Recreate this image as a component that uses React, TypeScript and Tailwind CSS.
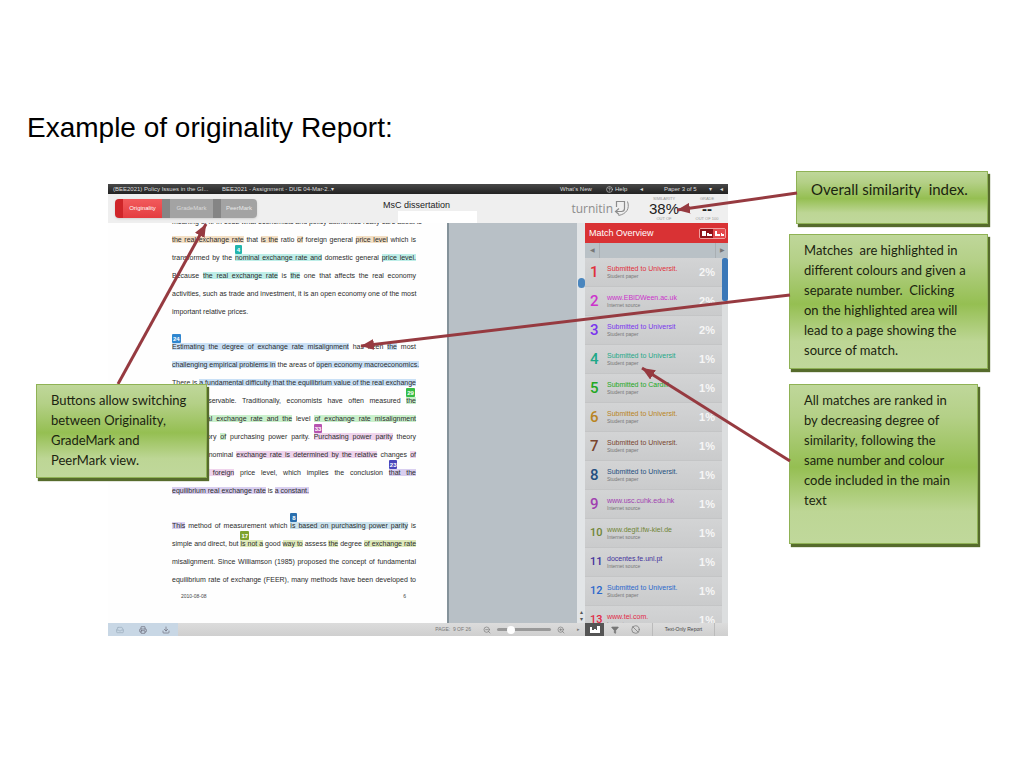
import React from 'react';
import { Filter, Ban, Printer, Download, ZoomIn, ZoomOut, Inbox, CircleHelp } from 'lucide-react';

type Segment = { text: string; mark?: string; badge?: string; badgeColor?: string };
type Line = Segment[];

const SAND = 'bg-[#f3dfc4]';
const AQUA = 'bg-[#bdeee8]';
const BLUE = 'bg-[#c9e0f6]';
const GREEN = 'bg-[#c9f0cb]';
const PINK = 'bg-[#efd3ec]';
const VIOLET = 'bg-[#d9cff0]';
const SKY = 'bg-[#cbe3ee]';
const OLIVE = 'bg-[#dfeabb]';

const paragraphs: Line[][] = [
  [
    [{ text: 'meaning of it. In 1982 what economists and policy authorities really care about is' }],
    [
      { text: 'the real exchange rate', mark: SAND },
      { text: ' that ' },
      { text: 'is the', mark: SAND },
      { text: ' ratio ' },
      { text: 'of', mark: SAND },
      { text: ' foreign general ' },
      { text: 'price level', mark: SAND },
      { text: ' which is' },
    ],
    [
      { text: 'transformed by the ' },
      { text: 'nominal exchange rate and', mark: AQUA, badge: '4', badgeColor: 'bg-[#22b5ad]' },
      { text: ' domestic general ' },
      { text: 'price level.', mark: AQUA },
    ],
    [
      { text: 'Because ' },
      { text: 'the real exchange rate', mark: AQUA },
      { text: ' is ' },
      { text: 'the', mark: AQUA },
      { text: ' one that affects the real economy' },
    ],
    [{ text: 'activities, such as trade and investment, it is an open economy one of the most' }],
    [{ text: 'important relative prices.' }],
  ],
  [
    [
      { text: 'Estimating the degree of exchange rate misalignment', mark: BLUE, badge: '24', badgeColor: 'bg-[#2f86cf]' },
      { text: ' has been ' },
      { text: 'the', mark: BLUE },
      { text: ' most' },
    ],
    [
      { text: 'challenging empirical problems in', mark: BLUE },
      { text: ' the areas of ' },
      { text: 'open economy macroeconomics.', mark: BLUE },
    ],
    [
      { text: 'There is ' },
      { text: 'a fundamental difficulty that the equilibrium value of the real exchange', mark: BLUE },
    ],
    [
      { text: 'rate is observable. Traditionally, economists have often measured ' },
      { text: 'the', mark: GREEN, badge: '29', badgeColor: 'bg-[#35bd45]' },
    ],
    [
      { text: 'bilateral real exchange rate and the', mark: GREEN },
      { text: ' level ' },
      { text: 'of exchange rate misalignment', mark: GREEN },
    ],
    [
      { text: 'by the theory ' },
      { text: 'of', mark: GREEN },
      { text: ' purchasing power parity. ' },
      { text: 'Purchasing power parity', mark: PINK, badge: '33', badgeColor: 'bg-[#b753b0]' },
      { text: ' theory' },
    ],
    [
      { text: 'states that nominal ' },
      { text: 'exchange rate is determined by the relative', mark: PINK },
      { text: ' changes ' },
      { text: 'of', mark: PINK },
    ],
    [
      { text: 'home and foreign', mark: PINK },
      { text: ' price level, which implies the conclusion ' },
      { text: 'that the', mark: VIOLET, badge: '23', badgeColor: 'bg-[#4a45ba]' },
    ],
    [
      { text: 'equilibrium real exchange rate', mark: VIOLET },
      { text: ' is ' },
      { text: 'a constant.', mark: VIOLET },
    ],
  ],
  [
    [
      { text: 'This', mark: VIOLET },
      { text: ' method of measurement which ' },
      { text: 'is based on purchasing power parity', mark: SKY, badge: '8', badgeColor: 'bg-[#2a6fae]' },
      { text: ' is' },
    ],
    [
      { text: 'simple and direct, but ' },
      { text: 'is not a', mark: OLIVE, badge: '17', badgeColor: 'bg-[#7fa32c]' },
      { text: ' good ' },
      { text: 'way to', mark: OLIVE },
      { text: ' assess ' },
      { text: 'the', mark: OLIVE },
      { text: ' degree ' },
      { text: 'of exchange rate', mark: OLIVE },
    ],
    [{ text: 'misalignment. Since Williamson (1985) proposed the concept of fundamental' }],
    [{ text: 'equilibrium rate of exchange (FEER), many methods have been developed to' }],
  ],
];

const matches = [
  { rank: 1, title: 'Submitted to Universit.', kind: 'Student paper', share: '2%', color: 'text-[#e0303c]' },
  { rank: 2, title: 'www.EBIDWeen.ac.uk', kind: 'Internet source', share: '2%', color: 'text-[#cc33cc]' },
  { rank: 3, title: 'Submitted to Universit', kind: 'Student paper', share: '2%', color: 'text-[#7a35ee]' },
  { rank: 4, title: 'Submitted to Universit', kind: 'Student paper', share: '1%', color: 'text-[#1fa888]' },
  { rank: 5, title: 'Submitted to Cardiff', kind: 'Student paper', share: '1%', color: 'text-[#22a822]' },
  { rank: 6, title: 'Submitted to Universit.', kind: 'Student paper', share: '1%', color: 'text-[#b98422]' },
  { rank: 7, title: 'Submitted to Universit.', kind: 'Student paper', share: '1%', color: 'text-[#79452f]' },
  { rank: 8, title: 'Submitted to Universit.', kind: 'Student paper', share: '1%', color: 'text-[#244f80]' },
  { rank: 9, title: 'www.usc.cuhk.edu.hk', kind: 'Internet source', share: '1%', color: 'text-[#a040b0]' },
  { rank: 10, title: 'www.degit.ifw-kiel.de', kind: 'Internet source', share: '1%', color: 'text-[#6f8535]' },
  { rank: 11, title: 'docentes.fe.unl.pt', kind: 'Internet source', share: '1%', color: 'text-[#43329c]' },
  { rank: 12, title: 'Submitted to Universit.', kind: 'Student paper', share: '1%', color: 'text-[#2c68cc]' },
  { rank: 13, title: 'www.tei.com.', kind: 'Internet source', share: '1%', color: 'text-[#e22a48]' },
];

const arrows = [
  { x1: 118, y1: 214, x2: 206, y2: 54 },
  { x1: 797, y1: 23, x2: 677, y2: 40 },
  { x1: 790, y1: 125, x2: 361, y2: 176 },
  { x1: 790, y1: 291, x2: 642, y2: 198 },
];

function Callout({ lines, className }: { lines: string[]; className: string }) {
  return (
    <div
      className={`border border-[#8fb255] bg-[linear-gradient(180deg,#bfd79a_0%,#b4d087_20%,#95bf52_52%,#bdd695_80%,#c0d89b_100%)] pt-[5px] pl-[14px] leading-[20px] whitespace-pre text-[#1b2410] shadow-[2px_3px_1px_#566b2c] ${className}`}
    >
      {lines.map((line) => (
        <p key={line}>{line}</p>
      ))}
    </div>
  );
}

function TextLine({ line, last }: { line: Line; last: boolean }) {
  return (
    <p className={last ? 'whitespace-nowrap' : 'whitespace-nowrap [text-align-last:justify]'}>
      {line.map((segment, i) => (
        <span key={i} className={`relative ${segment.mark ?? ''}`}>
          {segment.badge && (
            <span
              className={`absolute bottom-full left-0 flex h-[9px] min-w-[7px] items-center justify-center rounded-[1px] px-px text-[6px] leading-[6px] font-bold text-white ${segment.badgeColor}`}
            >
              {segment.badge}
            </span>
          )}
          {segment.text}
        </span>
      ))}
    </p>
  );
}

function TopBar() {
  return (
    <nav className="flex h-[10px] items-center bg-linear-to-b from-[#484848] to-[#222] px-[5px] text-[6px] leading-[10px] whitespace-nowrap text-[#dedede]">
      <a href="#course" className="w-[109px]">(BEE2021) Policy Issues in the GI...</a>
      <a href="#assignment">BEE2021 - Assignment - DUE 04-Mar-2..▾</a>
      <div className="ml-auto flex items-center">
        <a href="#new" className="w-[46px]">What's New</a>
        <a href="#help" className="flex w-[34px] items-center gap-[2px]">
          <CircleHelp className="h-[7px] w-[7px]" />
          Help
        </a>
        <button type="button" aria-label="Previous paper" className="w-[24px] text-left">◂</button>
        <span className="w-[45px]">Paper 3 of 5</span>
        <button type="button" aria-label="Choose paper" className="w-[11px] text-left">▾</button>
        <button type="button" aria-label="Next paper">◂</button>
      </div>
    </nav>
  );
}

function TurnitinLogo() {
  return (
    <div className="flex items-center text-[#8c8c8c]">
      <span className="font-['Open_Sans',sans-serif] text-[12px] leading-[16px]">turnitin</span>
      <svg viewBox="0 0 17 17" className="h-[17px] w-[17px]" fill="none" stroke="currentColor">
        <path d="M3.500 7V1.500h8v7c0 2-1 3-3 3H3" strokeWidth="1.200" />
        <path d="M6 8.500L2.500 11.500L6 14.500" strokeWidth="1.200" />
        <path d="M14.500 1.500c2.500 7-1 12.500-9 14" strokeWidth="1" />
      </svg>
    </div>
  );
}

function Header() {
  return (
    <header className="flex h-[29px] items-center bg-[#efefef] pl-[7px]">
      <div className="flex h-[19px] overflow-hidden rounded-[4px] text-[6px] text-white shadow-sm">
        <button type="button" className="w-[47px] border-l-8 border-[#cf2529] bg-linear-to-b from-[#f25a5c] to-[#e43c40]">
          Originality
        </button>
        <button type="button" className="w-[51px] border-l-8 border-[#858585] bg-[#a3a3a3] text-[#dadada]">
          GradeMark
        </button>
        <button type="button" className="w-[44px] border-l-8 border-[#858585] bg-[#a3a3a3] text-[#e8e8e8]">
          PeerMark
        </button>
      </div>
      <div className="relative flex-1 self-stretch">
        <h2 className="pt-[5px] pl-[126px] text-[9px] leading-[12px] text-[#222]">MsC dissertation</h2>
        <div className="ml-[141px] h-[12px] w-[79px] bg-white" />
      </div>
      <TurnitinLogo />
      <div className="ml-[17px] w-[34px] text-center text-[#999]">
        <p className="text-[4px] leading-[5px]">SIMILARITY</p>
        <p className="text-[15px] leading-[15px] text-[#222]">38%</p>
        <p className="text-[4px] leading-[5px]">OUT OF</p>
      </div>
      <div className="mr-[5px] ml-[10px] w-[32px] text-center text-[#999]">
        <p className="text-[4px] leading-[5px]">GRADE</p>
        <p className="text-[15px] leading-[15px] font-bold text-[#222]">--</p>
        <p className="text-[4px] leading-[5px]">OUT OF 100</p>
      </div>
    </header>
  );
}

function Document() {
  return (
    <article className="w-[341px] shrink-0 overflow-hidden border-r-2 border-[#84929a] bg-[#fefefe]">
      <div className="-mt-[10px] ml-[64px] flex w-[244px] flex-col gap-[17px] text-[7px] leading-[18px] text-[#2c2c2c]">
        {paragraphs.map((lines, p) => (
          <div key={p}>
            {lines.map((line, i) => (
              <TextLine key={i} line={line} last={p < 2 && i === lines.length - 1} />
            ))}
          </div>
        ))}
      </div>
      <div className="ml-[73px] flex w-[225px] justify-between text-[5px] leading-[14px] text-[#444]">
        <span>2010-08-08</span>
        <span>6</span>
      </div>
    </article>
  );
}

function MatchPanel() {
  return (
    <section className="flex w-[143px] flex-col overflow-hidden bg-[#cdcecf]">
      <div className="flex h-[20px] shrink-0 items-center justify-between bg-[#d93234] pr-[2px] pl-[4px]">
        <h3 className="text-[9px] leading-[18px] text-white">Match Overview</h3>
        <div className="flex h-[11px] overflow-hidden rounded-[2px] border border-[#efa0a0]">
          <button type="button" aria-label="Match overview" className="w-[13px] bg-[#8e1218]">
            <svg viewBox="0 0 13 9" className="h-[9px] w-[13px]" fill="white">
              <path d="M2 2h4v5H2zM7 4h2v3H7zM9 5h3v2h-3z" />
            </svg>
          </button>
          <button type="button" aria-label="All sources" className="w-[12px] bg-[#e4494c]">
            <svg viewBox="0 0 12 9" className="h-[9px] w-[12px]" fill="white">
              <path d="M2 2h2v5H2zM4 5h3v2H4zM8 4h1v3H8zM9 5h2v2H9z" />
            </svg>
          </button>
        </div>
      </div>
      <div className="flex h-[15px] shrink-0 items-center justify-between bg-[#b9c1c6] text-[6px] leading-[15px] text-[#777]">
        <button type="button" aria-label="Previous match" className="h-full w-[15px] border-r border-[#a9afb3]">◀</button>
        <button type="button" aria-label="Next match" className="h-full w-[13px] border-l border-[#a9afb3]">▶</button>
      </div>
      <div className="flex min-h-0 flex-1">
        <ol className="flex-1">
          {matches.map((match) => (
            <li
              key={match.rank}
              className="flex h-[29px] items-center border-b border-[#c4c5c6] bg-linear-to-b from-[#d3d4d5] to-[#cacbcc] pr-[7px] pl-[5px]"
            >
              <span className={`w-[17px] font-['Roboto',sans-serif] font-medium ${match.rank > 9 ? 'text-[11px]' : 'text-[15px]'} ${match.color}`}>
                {match.rank}
              </span>
              <span className="flex-1 whitespace-nowrap">
                <a href={`#match-${match.rank}`} className={`block text-[7px] leading-[8px] ${match.color}`}>
                  {match.title}
                </a>
                <span className="block text-[5px] leading-[6px] text-[#777]">{match.kind}</span>
              </span>
              <span className="text-[11px] font-bold text-[#f6f6f6]">{match.share}</span>
            </li>
          ))}
        </ol>
        <div className="w-[6px] bg-[#dcdedf]">
          <div className="h-[43px] rounded-[2px] bg-[#3b78b8]" />
        </div>
      </div>
    </section>
  );
}

function BottomBar() {
  return (
    <footer className="flex h-[13px] items-center bg-linear-to-b from-[#dcdcdc] to-[#cfcfcf] text-[5px] leading-[13px] text-[#777]">
      <div className="flex h-full w-[70px] items-center justify-around bg-[#c8d7e5] text-[#667]">
        <button type="button" aria-label="Inbox"><Inbox className="h-[8px] w-[8px] text-[#9ab]" /></button>
        <button type="button" aria-label="Print"><Printer className="h-[8px] w-[8px]" /></button>
        <button type="button" aria-label="Download"><Download className="h-[8px] w-[8px]" /></button>
      </div>
      <span className="ml-auto">PAGE: &nbsp;9 OF 26</span>
      <ZoomOut className="ml-[12px] h-[8px] w-[8px]" />
      <input
        type="range"
        aria-label="Zoom"
        defaultValue={22}
        className="mx-[6px] h-[3px] w-[54px] appearance-none rounded bg-[#999] [&::-webkit-slider-thumb]:h-[8px] [&::-webkit-slider-thumb]:w-[8px] [&::-webkit-slider-thumb]:appearance-none [&::-webkit-slider-thumb]:rounded-full [&::-webkit-slider-thumb]:bg-white"
      />
      <ZoomIn className="mr-[12px] h-[8px] w-[8px]" />
      <span className="w-[8px]">▸</span>
      <div className="flex h-full w-[143px] items-center">
        <button type="button" aria-label="Sources" className="flex h-full w-[19px] items-center justify-center bg-[#555]">
          <svg viewBox="0 0 10 7" className="h-[7px] w-[10px]" fill="white">
            <path d="M0 1h2v3h2V3h2v1h1V0h3v7H0z" />
          </svg>
        </button>
        <button type="button" aria-label="Filter" className="flex w-[22px] justify-center">
          <Filter className="h-[8px] w-[8px]" fill="currentColor" />
        </button>
        <button type="button" aria-label="Exclude" className="flex w-[18px] justify-center">
          <Ban className="h-[9px] w-[9px]" />
        </button>
        <button type="button" className="ml-[8px] h-full w-[63px] border-x border-[#bbb] text-[5px] text-[#444]">
          Text-Only Report
        </button>
      </div>
    </footer>
  );
}

function ReportWindow() {
  return (
    <div className="mt-[14px] min-w-0 flex-1">
      <TopBar />
      <Header />
      <div className="flex h-[400px]">
        <Document />
        <div className="flex-1 bg-[#b8c0c6]" />
        <div className="flex w-[8px] flex-col items-center bg-[#e2e5e7]">
          <div className="mt-[55px] h-[10px] w-[7px] rounded-full bg-[#4a86be]" />
          <div className="mt-auto text-[6px] leading-[7px] text-[#555]">
            <p>▴</p>
            <p>▾</p>
          </div>
        </div>
        <MatchPanel />
      </div>
      <BottomBar />
    </div>
  );
}

export default function App() {
  return (
    <main className="min-h-screen bg-white pt-[110px] font-['Liberation_Sans',Arial,sans-serif]">
      <h1 className="pl-[27px] text-[28px] leading-[36px] text-black">Example of originality Report:</h1>

      <figure className="relative mt-[24px] flex items-start pr-[36px] pl-[108px]">
        <ReportWindow />

        <div className="ml-[61px] flex w-[199px] flex-col pt-px font-['Lato',sans-serif] text-[13px]">
          <Callout className="mb-[10px] ml-[7px] h-[53px] pt-[7px] text-[15px]" lines={['Overall similarity  index.']} />
          <Callout
            className="mb-[15px] h-[135px]"
            lines={[
              'Matches  are highlighted in',
              'different colours and given a',
              'separate number.  Clicking',
              'on the highlighted area will',
              'lead to a page showing the',
              'source of match.',
            ]}
          />
          <Callout
            className="mr-[10px] h-[160px]"
            lines={[
              'All matches are ranked in',
              'by decreasing degree of',
              'similarity, following the',
              'same number and colour',
              'code included in the main',
              'text',
            ]}
          />
        </div>

        {/* Arrows from the notes to the parts of the report */}
        <svg viewBox="0 0 1024 466" preserveAspectRatio="none" className="pointer-events-none absolute inset-0 h-[466px] w-full">
          <defs>
            <marker id="head" viewBox="0 0 12 10" refX="12" refY="5" markerWidth="13" markerHeight="11" markerUnits="userSpaceOnUse" orient="auto">
              <path d="M0 0L12 5L0 10z" fill="#963a40" />
            </marker>
          </defs>
          {arrows.map((arrow) => (
            <line key={arrow.x2} {...arrow} stroke="#963a40" strokeWidth="3" markerEnd="url(#head)" />
          ))}
        </svg>

        <div className="absolute top-[214px] left-[36px] w-[171px] font-['Lato',sans-serif] text-[13px]">
          <Callout
            className="h-[94px]"
            lines={['Buttons allow switching', 'between Originality,', 'GradeMark and', 'PeerMark view.']}
          />
        </div>
      </figure>
    </main>
  );
}
